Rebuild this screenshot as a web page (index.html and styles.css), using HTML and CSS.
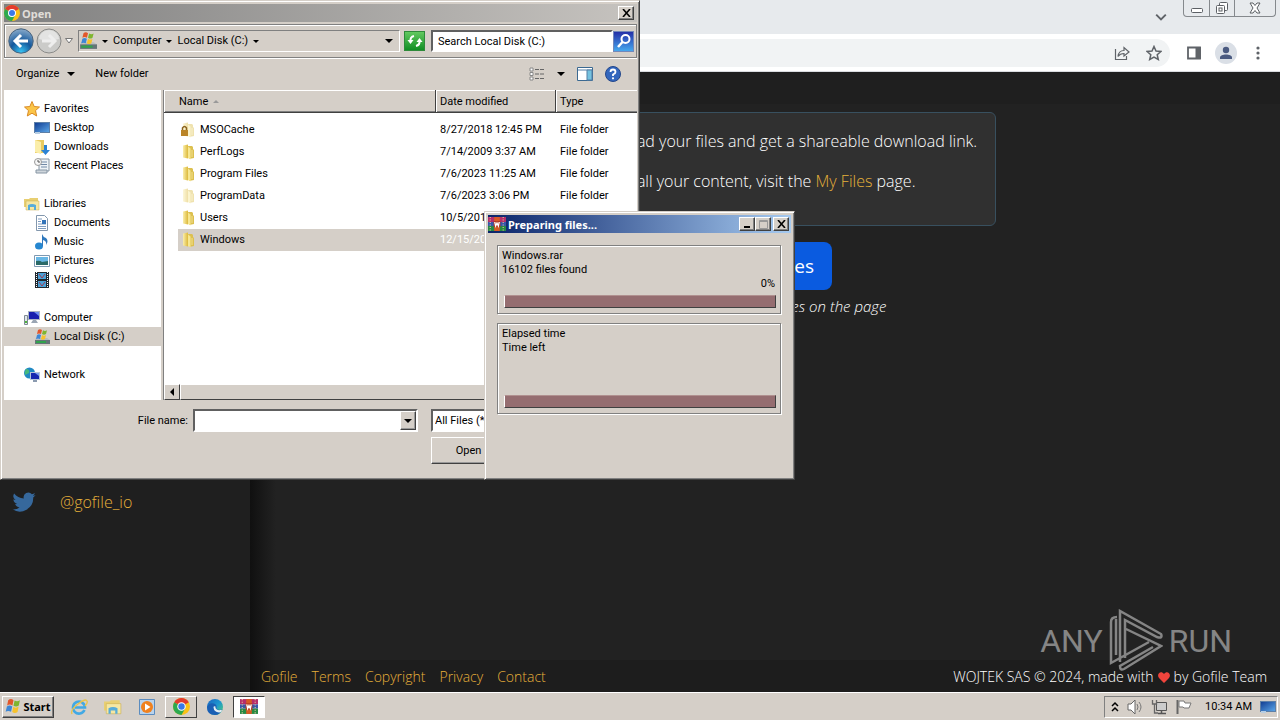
FILE: index.html
```html
<!DOCTYPE html>
<html lang="en">
<head>
<meta charset="utf-8">
<title>Gofile</title>
<link rel="stylesheet" href="styles.css">
</head>
<body>
<svg class="defs" aria-hidden="true">
  <defs>
    <linearGradient id="gold" x1="0" x2="1"><stop offset="0" stop-color="#fbeeaa"/><stop offset="1" stop-color="#dcb93c"/></linearGradient>
    <linearGradient id="screen" x1="0" y1="0" x2="1" y2="1"><stop offset="0" stop-color="#123f94"/><stop offset="1" stop-color="#5aa4e6"/></linearGradient>
    <linearGradient id="edgeg" x1="0" y1="0" x2="1" y2="1"><stop offset="0" stop-color="#1b62c0"/><stop offset=".5" stop-color="#1c96cf"/><stop offset="1" stop-color="#55d46a"/></linearGradient>
    <radialGradient id="orb" cx=".5" cy=".95" r=".9"><stop offset="0" stop-color="#38c4f4"/><stop offset=".5" stop-color="#14589c"/><stop offset="1" stop-color="#7fa3c6"/></radialGradient>
    <symbol id="chrome" viewBox="0 0 16 16">
      <circle cx="8" cy="8" r="8" fill="#fbc116"/>
      <path d="M8 8L1.100 4A8 8 0 0 1 14.900 4z" fill="#e33b2e"/>
      <path d="M1.100 4A8 8 0 0 0 8 16L11.300 10 8 8z" fill="#2da94f"/>
      <circle cx="8" cy="8" r="4" fill="#fff"/><circle cx="8" cy="8" r="3" fill="#3b78e7"/>
    </symbol>
    <symbol id="folder" viewBox="0 0 16 16">
      <path d="M8 2h4l1 1v2l1 1v8l-5 1z" fill="#dcc050"/>
      <path d="M3 1.500L8 .5v14l-5-1z" fill="url(#gold)"/><path d="M8 2.500l2.500 2V15.500L8 14z" fill="#f7e791"/>
      <path d="M12 6v7" stroke="#f3e190"/>
    </symbol>
    <symbol id="flag" viewBox="0 0 16 16">
      <path d="M3 2q2.500-2 5 0L7 7Q4.500 5.300 2 7z" fill="#e2572b"/><path d="M9 2.300q2.500 1.700 5-.3l-1 5q-2.500 1.800-5 .2z" fill="#7fb52f"/>
      <path d="M1.800 8q2.500-1.700 5 0L5.700 13Q3 11.400.6 13z" fill="#3d87d6"/><path d="M7.800 8.300q2.500 1.700 5-.2l-1 5q-2.500 1.800-5 .1z" fill="#f6c22c"/>
    </symbol>
    <symbol id="disk" viewBox="0 0 16 16">
      <path d="M2 9h11l3 2v4H1v-4z" fill="#b9bdbf"/><path d="M1 11h15v4H1z" fill="#657477"/><path d="M2 12h10v2H2z" fill="#31a34d"/>
      <path d="M4 1q2-1.500 4 0L7 5Q5 4 3 5z" fill="#e2572b"/><path d="M9 1.300q2 1.400 4 0L12 5q-2 1.500-4 0z" fill="#7fb52f"/><path d="M3 6q2-1.500 4 0l-1 4q-2-1-4 0z" fill="#3d87d6"/><path d="M8 6q2 1.500 4 0l-1 4q-2 1.500-4 0z" fill="#f6c22c"/>
    </symbol>
    <symbol id="desktop" viewBox="0 0 16 16"><path d="M0 2h16v11H0z" fill="#5d7fa7"/><path d="M1 3h14v9H1z" fill="url(#screen)"/><path d="M1 12h5v2H1z" fill="#b7cde2"/></symbol>
    <symbol id="rar" viewBox="0 0 16 16" preserveAspectRatio="none">
      <path d="M0 1h16v5H0z" fill="#b52e6b"/><path d="M0 6h16v4H0z" fill="#3857a9"/><path d="M0 10h16v5H0z" fill="#278a43"/>
      <path d="M5.500 1h5v14h-5z" fill="#d85a24"/><path d="M2 1v14M13.500 1v14" stroke="#e8c89b" stroke-dasharray="1 1.500"/>
      <path d="M5 5h6v6H5z" fill="#b33a1e"/><path d="M6 6l.8 4L8 7l1.200 3L10 6" fill="none" stroke="#fff" stroke-width="1.200"/>
    </symbol>
    <symbol id="libs" viewBox="0 0 16 16"><path d="M0 3h5l1-1h8v9H0z" fill="#e8cf72"/><path d="M2 5h13v9H2z" fill="#f5e7a3" stroke="#c9ac4d" stroke-width=".5"/><path d="M4 14V9q4-2 8 0v5h-2v-3H6v3z" fill="#57acd9"/></symbol>
  </defs>
</svg>

<div class="desktop">
  <div class="browser">
    <header class="tabstrip">
      <svg class="tab-search" viewBox="0 0 10 10"><path d="M1 3L5 7 9 3" fill="none" stroke="#5f6368" stroke-width="1.600"/></svg>
      <div class="caption-buttons">
        <button aria-label="Minimize"><svg width="14" height="14" viewBox="0 0 14 14"><rect x="1.500" y="7.500" width="11" height="4" rx="1" fill="#fff" stroke="#5c6065"/></svg></button>
        <button aria-label="Restore"><svg width="14" height="14" viewBox="0 0 14 14"><rect x="4.500" y="1.500" width="8" height="8" rx="1" fill="#fff" stroke="#5c6065"/><rect x="1.500" y="4.500" width="8" height="8" rx="1" fill="#fff" stroke="#5c6065"/><rect x="4" y="7" width="3" height="3" fill="none" stroke="#5c6065"/></svg></button>
        <button class="wide" aria-label="Close"><svg width="14" height="14" viewBox="0 0 14 14"><path d="M2 2h3l2 2.500L9 2h3L9 7l3 5H9L7 9.500 5 12H2l3-5z" fill="#fff" stroke="#5c6065"/></svg></button>
      </div>
    </header>
    <div class="toolbar">
      <div class="omnibox">
        <button aria-label="Share"><svg width="16" height="16" viewBox="0 0 16 16"><path d="M1.500 4v10.500h11V11M4 11.500C4.500 7 7 5.500 10 5.500V2.500L15 7l-5 4V8.500c-3 0-4.500.8-6 3z" fill="none" stroke="#5f6368" stroke-width="1.200"/></svg></button>
        <button aria-label="Bookmark"><svg width="16" height="16" viewBox="0 0 16 16"><path d="M8 1.500l2 4.600 4.900.4-3.700 3.200 1.100 4.800L8 12l-4.300 2.500 1.100-4.800L1.100 6.500 6 6.100z" fill="none" stroke="#5f6368" stroke-width="1.500"/></svg></button>
      </div>
      <button aria-label="Side panel"><svg width="16" height="16" viewBox="0 0 16 16"><path d="M2 2.500h12v11H2z" fill="none" stroke="#5f6368" stroke-width="1.800"/><path d="M9.500 2H15v12H9.500z" fill="#5f6368"/></svg></button>
      <button class="avatar" aria-label="Profile"><svg width="22" height="22" viewBox="0 0 22 22"><circle cx="11" cy="11" r="11" fill="#dadfe6"/><circle cx="11" cy="8" r="3.200" fill="#4a5a80"/><path d="M5 17v-1.500c0-4 12-4 12 0V17z" fill="#4a5a80"/></svg></button>
      <button aria-label="Menu"><svg width="16" height="16" viewBox="0 0 16 16" fill="#5f6368"><circle cx="8" cy="3" r="1.600"/><circle cx="8" cy="8" r="1.600"/><circle cx="8" cy="13" r="1.600"/></svg></button>
    </div>
    <div class="site">
      <nav class="side">
        <a class="social" href="#"><svg width="24" height="24" viewBox="0 0 24 24"><path d="M23.600 4.900c-.8.400-1.700.6-2.700.8 1-.6 1.700-1.500 2-2.600-.9.500-1.900.9-3 1.100a4.700 4.700 0 0 0-8.100 4.300C7.900 8.300 4.400 6.400 2.100 3.600a4.700 4.700 0 0 0 1.500 6.300c-.8 0-1.500-.2-2.200-.6 0 2.300 1.600 4.300 3.800 4.700-.7.200-1.400.2-2.100.1.600 1.900 2.300 3.200 4.400 3.300A9.500 9.500 0 0 1 .5 19.300a13.400 13.400 0 0 0 20.700-11.900c.9-.7 1.800-1.500 2.400-2.500z" fill="#36689c"/></svg>@gofile_io</a>
      </nav>
      <div class="page">
        <div class="page-head"></div>
        <main>
          <div class="notice">
            <p>ad your files and get a shareable download link.</p>
            <p>all your content, visit the <a href="#">My Files</a> page.</p>
          </div>
          <button class="upload">es</button>
          <p class="hint">Or drag &amp; drop your files on the page</p>
        </main>
        <div class="brand">ANY<svg width="54" height="64" viewBox="0 0 54 64"><path d="M8 8Q2 8 2 13V54L40 33M7 10V46M11 53V2L52 25Q54 30 48 28L16 11V49M17 20L52 37L15 60Q11 62 11 57L44 38" fill="none" stroke="currentColor" stroke-width="2.500"/></svg>RUN</div>
        <footer>
          <div class="links"><a href="#">Gofile</a><a href="#">Terms</a><a href="#">Copyright</a><a href="#">Privacy</a><a href="#">Contact</a></div>
          <div class="credit">WOJTEK SAS © 2024, made with <svg width="12" height="11" viewBox="0 0 12 11"><path d="M6 11L1 6C-2 2 3-2 6 2c3-4 8 0 5 4z" fill="#f0443c"/></svg> by Gofile Team</div>
        </footer>
      </div>
    </div>
  </div>

  <section class="window open-dialog" aria-label="Open">
    <div class="titlebar inactive"><svg width="16" height="16"><use href="#chrome"/></svg><span>Open</span>
      <button class="cap" aria-label="Close dialog"><svg width="9" height="8" viewBox="0 0 9 8"><path d="M1 0l7 8M8 0L1 8" stroke="#000" stroke-width="1.600"/></svg></button>
    </div>
    <div class="navbar">
      <button class="orb" aria-label="Back"><svg width="26" height="26" viewBox="0 0 26 26"><circle cx="13" cy="13" r="12.200" fill="url(#orb)" stroke="#49637d"/><path d="M13 7l-6 6 6 6M7.500 13H20" fill="none" stroke="#fff" stroke-width="3"/></svg></button>
      <button class="orb" aria-label="Forward"><svg width="26" height="26" viewBox="0 0 26 26"><circle cx="13" cy="13" r="12" fill="#cbcbc9" stroke="#8b8b89"/><path d="M3 11a10 9 0 0 1 20 0q-10 3-20 0z" fill="#e3e3e2"/><path d="M13 7l6 6-6 6M18 13H6" fill="none" stroke="#eee" stroke-width="3"/></svg></button>
      <svg class="recent" width="8" height="6" viewBox="0 0 8 6"><path d="M.5.500h7L4 5z" fill="#fff" stroke="#777"/></svg>
      <div class="address">
        <svg width="18" height="18"><use href="#disk"/></svg>
        <i class="tri"></i><span class="crumb">Computer</span><i class="tri"></i><span class="crumb">Local Disk (C:)</span><i class="tri"></i><i class="tri big end"></i>
      </div>
      <button class="refresh" aria-label="Refresh"><svg width="18" height="18" viewBox="0 0 18 18"><path d="M8 4Q4 5 4.500 9M10 14q4-1 3.500-5" fill="none" stroke="#fff" stroke-width="2"/><path d="M1.500 8h6l-3 4zM10.500 10h6l-3-4z" fill="#fff"/></svg></button>
      <input class="search" aria-label="Search" value="Search Local Disk (C:)">
      <button class="go" aria-label="Search now"><svg width="18" height="18" viewBox="0 0 18 18"><circle cx="10.500" cy="7" r="4" fill="none" stroke="#fff" stroke-width="2"/><path d="M7.500 10L3 15" stroke="#fff" stroke-width="2.500"/></svg></button>
    </div>
    <div class="commands">
      <button>Organize <i class="tri big"></i></button><button>New folder</button>
      <span class="spacer"></span>
      <button aria-label="Views"><svg width="16" height="14" viewBox="0 0 16 14"><path d="M1 1h3v3H1zM1 5.500h3v3H1zM1 10h3v3H1z" fill="#fff" stroke="#888"/><path d="M6 2.500h9M6 7h9M6 11.500h9" stroke="#666" stroke-dasharray="4 1"/></svg></button>
      <button aria-label="More views"><i class="tri big"></i></button>
      <button aria-label="Preview pane"><svg width="16" height="14" viewBox="0 0 16 14"><path d="M.5.500h15v13H.5z" fill="#fff" stroke="#3b6991"/><path d="M1 3h14" stroke="#557fa5"/><path d="M10 3h5v10h-5z" fill="#75c2df" stroke="#557fa5"/></svg></button>
      <button aria-label="Help"><svg width="16" height="16" viewBox="0 0 16 16"><circle cx="8" cy="8" r="7.500" fill="#3266bd" stroke="#23478b"/><path d="M5.500 6Q5.500 3.500 8 3.500T10.500 6Q10.500 7.500 8 8.500V10" fill="none" stroke="#fff" stroke-width="1.800"/><circle cx="8" cy="12.300" r="1.100" fill="#fff"/></svg></button>
    </div>
    <div class="explorer">
      <ul class="tree">
        <li><svg viewBox="0 0 16 16"><path d="M8 .5l2.200 5 5.300.5-4 3.600 1.200 5.400L8 12.200 3.300 15l1.200-5.400-4-3.600 5.300-.5z" fill="#fbc548" stroke="#d98a26"/></svg>Favorites</li>
        <li class="sub"><svg><use href="#desktop"/></svg>Desktop</li>
        <li class="sub"><svg viewBox="0 0 16 16"><path d="M1 1h9v13H1z" fill="#e9cb62"/><path d="M1 1l6 2v12l-6-2z" fill="#fbeeaa"/><path d="M10 6h3v5h3l-4.500 5L7 11h3z" fill="#2b82d4"/></svg>Downloads</li>
        <li class="sub"><svg viewBox="0 0 16 16"><path d="M5 1h10v12H5z" fill="#eef3f7" stroke="#8796a4"/><path d="M2 12h11v3H2z" fill="#cfd6dc" stroke="#8796a4"/><path d="M7 4h6M7 6.500h6M7 9h6" stroke="#7189a6"/><circle cx="4" cy="4" r="3.500" fill="#f7f7f7" stroke="#9a9a9a"/><path d="M4 2v2h2" fill="none" stroke="#555"/></svg>Recent Places</li>
        <li class="group"><svg><use href="#libs"/></svg>Libraries</li>
        <li class="sub"><svg viewBox="0 0 16 16"><path d="M2.500.500h8l3 3v12h-11z" fill="#fff" stroke="#8397ad"/><path d="M4 4h4M4 6.500h3M4 9h8M4 11.500h8M4 13.500h8" stroke="#7e9cc0"/><path d="M8 5h4v4H8z" fill="#3374b9"/></svg>Documents</li>
        <li class="sub"><svg viewBox="0 0 16 16"><ellipse cx="5" cy="12" rx="4" ry="3.500" fill="#2687d0"/><path d="M8 12V0q1 3 4 4 3 3 0 7 1-4-3-5v6z" fill="#2f78bd"/></svg>Music</li>
        <li class="sub"><svg viewBox="0 0 16 16"><path d="M.5 2.500h15v11H.5z" fill="#fff" stroke="#7e99b2"/><path d="M2 4h12v8H2z" fill="#69b7e5"/><path d="M2 8q4-1 6 1l6-1v4H2z" fill="#2a6a68"/></svg>Pictures</li>
        <li class="sub"><svg viewBox="0 0 16 16"><path d="M1 0h14v16H1z" fill="#20272e"/><path d="M4 1h8v6H4zM4 9h8v6H4z" fill="#4ba1d7"/><path d="M5 2l3 4 3-4M5 10l3 4 3-4" stroke="#a03e52" fill="none"/><path d="M2.500 0v16M13.500 0v16" stroke="#fff" stroke-dasharray="1 1"/></svg>Videos</li>
        <li class="group"><svg viewBox="0 0 16 16"><path d="M4 1h12v9H4z" fill="#a9b3c2"/><path d="M5 2h10v7H5z" fill="#171fae"/><path d="M10 2h5v4z" fill="#6c8df0"/><path d="M9 10h3l2 3H7z" fill="#9aa5b3"/><path d="M.5 5.500h3v9h-3z" fill="#e0e6ea" stroke="#7e8b95"/><path d="M1 11h2v2H1z" fill="#50b33c"/></svg>Computer</li>
        <li class="sub picked"><svg><use href="#disk"/></svg>Local Disk (C:)</li>
        <li class="group"><svg viewBox="0 0 16 16"><circle cx="5.500" cy="6" r="5.500" fill="#2089c4"/><path d="M2 2q4 0 3 4l-4 2q-1-3 1-6z" fill="#45b97d"/><path d="M6 5h10v8H6z" fill="#b8c6d9"/><path d="M7 6h8v6H7z" fill="#1727b0"/><path d="M11 6h4v3z" fill="#7c9cf0"/><path d="M9 13h4v2H9z" fill="#8b9bb0"/></svg>Network</li>
      </ul>
      <div class="files">
        <table>
          <colgroup><col class="c-name"><col class="c-date"><col></colgroup>
          <thead><tr><th>Name <i class="sort"></i></th><th>Date modified</th><th>Type</th></tr></thead>
          <tbody>
            <tr><td><span><svg><use href="#folder" opacity=".45"/><path d="M1 8h7v6H1z" fill="#ba8427"/><path d="M2.500 8V6q2-3 4 0v2" fill="none" stroke="#8c641e" stroke-width="1.500"/></svg>MSOCache</span></td><td>8/27/2018 12:45 PM</td><td>File folder</td></tr>
            <tr><td><span><svg><use href="#folder"/></svg>PerfLogs</span></td><td>7/14/2009 3:37 AM</td><td>File folder</td></tr>
            <tr><td><span><svg><use href="#folder"/></svg>Program Files</span></td><td>7/6/2023 11:25 AM</td><td>File folder</td></tr>
            <tr><td><span><svg><use href="#folder" opacity=".45"/></svg>ProgramData</span></td><td>7/6/2023 3:06 PM</td><td>File folder</td></tr>
            <tr><td><span><svg><use href="#folder"/></svg>Users</span></td><td>10/5/2017</td><td></td></tr>
            <tr class="picked"><td><span><svg><use href="#folder"/></svg>Windows</span></td><td>12/15/2022</td><td></td></tr>
          </tbody>
        </table>
        <div class="scroll"><button aria-label="Scroll left"><i></i></button><div class="thumb"></div></div>
      </div>
    </div>
    <div class="bottom">
      <label for="fname">File name:</label>
      <div class="combo"><input id="fname"><button aria-label="Show names"><i class="tri big"></i></button></div>
      <div class="right">
        <select aria-label="File type"><option>All Files (*.*)</option></select>
        <button class="push">Open</button>
      </div>
    </div>
  </section>

  <section class="window progress-dialog" aria-label="Preparing files">
    <div class="titlebar"><svg width="18" height="16"><use href="#rar"/></svg><span>Preparing files...</span>
      <button class="cap" aria-label="Minimize window"><svg width="9" height="8"><path d="M1 6h6v2H1z"/></svg></button>
      <button class="cap" aria-label="Maximize window"><svg width="9" height="9" viewBox="0 0 9 9"><path d="M.5.500h8v8h-8zM0 1.500h9" fill="none" stroke="#999"/></svg></button>
      <button class="cap gap" aria-label="Close window"><svg width="9" height="8" viewBox="0 0 9 8"><path d="M1 0l7 8M8 0L1 8" stroke="#000" stroke-width="1.600"/></svg></button>
    </div>
    <div class="group-box">
      <p>Windows.rar</p><p>16102 files found</p><p class="pct">0%</p>
      <div class="bar"></div>
    </div>
    <div class="group-box times">
      <p>Elapsed time</p><p>Time left</p>
      <div class="bar"></div>
    </div>
  </section>

  <div class="taskbar">
    <button class="start"><svg width="17" height="17"><use href="#flag"/></svg>Start</button>
    <div class="launch">
      <button aria-label="Internet Explorer"><svg width="18" height="18" viewBox="0 0 18 18"><path d="M14.500 12A6 6 0 1 1 15 9.500H5" fill="none" stroke="#42a9e4" stroke-width="2.600"/><path d="M2 16Q0 12 8 6t9-3q1 2-2 5" fill="none" stroke="#e9c44b" stroke-width="1.400"/></svg></button>
      <button aria-label="Explorer"><svg width="18" height="18"><use href="#libs"/></svg></button>
      <button aria-label="Media Player"><svg width="18" height="18" viewBox="0 0 18 18"><path d="M1.500 1.500h15v15h-15z" fill="#b9d3ec" stroke="#5b8cbf"/><circle cx="9" cy="9" r="6" fill="#f0811e"/><path d="M7 5.500v7L12.500 9z" fill="#fff"/></svg></button>
      <button class="task" aria-label="Chrome"><svg width="17" height="17"><use href="#chrome"/></svg></button>
      <button aria-label="Edge"><svg width="18" height="18" viewBox="0 0 18 18"><circle cx="9" cy="9" r="8" fill="url(#edgeg)"/><path d="M1 9Q3 4 8 5.500q3 1 2.500 4-.5 1.500 1 2 3 1 5-.5Q14 17 9 17 1 17 1 9z" fill="#1a5fb4"/><path d="M7.500 9.500Q8 14 13 14.500q2 0 3-1.500l-.5-1.200q-3 1-5-.5Q9 10 9.500 8.500 7.500 7.500 7.500 9.500z" fill="#e2eef3"/></svg></button>
      <button class="task active" aria-label="WinRAR"><svg width="18" height="17"><use href="#rar"/></svg></button>
    </div>
    <div class="tray">
      <svg width="8" height="12" viewBox="0 0 8 12"><path d="M1 5l3-3 3 3M1 10l3-3 3 3" fill="none" stroke="#000" stroke-width="1.500"/></svg>
      <svg width="16" height="16" viewBox="0 0 16 16"><path d="M1 5h3l4-4v14l-4-4H1z" fill="#fff" stroke="#666"/><path d="M10 5q2 3 0 6M12 3q4 5 0 10" fill="none" stroke="#777"/></svg>
      <svg width="17" height="16" viewBox="0 0 17 16"><path d="M5.500 3.500h10v8h-10z" fill="#ccc" stroke="#555"/><path d="M7 14.500h8M10.500 12v2" stroke="#555" stroke-width="1.500"/><path d="M1.500 1v4h4V1M3.500 5v9H7" fill="none" stroke="#666" stroke-width="1.300"/></svg>
      <svg width="16" height="16" viewBox="0 0 16 16"><path d="M1.500 1v14" stroke="#666" stroke-width="2"/><path d="M3 2h5l1 2h6l-2 5H8L7 8H3z" fill="#fff" stroke="#777"/></svg>
      <time>10:34 AM</time>
      <svg width="16" height="16"><use href="#desktop"/></svg>
    </div>
  </div>
</div>
</body>
</html>
```
FILE: styles.css
```css
:root {
  --face: #d5cfc8;
  --dark: #404040;
  --ui: 11px/14px Roboto, Tahoma, sans-serif;
  --ui-bold: 700 11px/13px "Noto Sans", Tahoma, sans-serif;
  --web: "Open Sans", "Noto Sans", sans-serif;
  --gold: #e6b03a;
}
* { box-sizing: border-box; }
body { margin: 0; font: var(--ui); color: #000; }
p, ul { margin: 0; padding: 0; }
button, input, select { font: inherit; color: inherit; border-radius: 0; padding: 0; margin: 0; }
button { background: none; border: 0; display: flex; align-items: center; justify-content: center; }
svg { flex: none; display: block; }
.defs { position: absolute; width: 0; height: 0; }
.desktop { position: relative; height: 100vh; display: flex; flex-direction: column; overflow: hidden; }

/* Browser */
.browser { flex: 1; display: flex; flex-direction: column; min-height: 0; }
.tabstrip { height: 34px; background: #e7eaed; display: flex; justify-content: flex-end; align-items: flex-start; padding-right: 4px; }
.tab-search { width: 12px; height: 12px; margin: 11px 16px 0 0; }
.caption-buttons { display: flex; height: 17px; border: 1px solid #85898d; border-top: 0; border-radius: 0 0 4px 4px; }
.caption-buttons button { width: 25px; }
.caption-buttons button + button { border-left: 1px solid #85898d; }
.caption-buttons .wide { width: 41px; }
.toolbar { height: 38px; background: #fff; border-bottom: 1px solid #dadce0; display: flex; align-items: center; gap: 16px; padding-right: 14px; }
.omnibox { flex: 1; height: 28px; border-radius: 14px; background: #f1f3f4; display: flex; align-items: center; justify-content: flex-end; gap: 16px; padding-right: 8px; }
.toolbar > button { width: 16px; }
.toolbar > .avatar { width: 22px; margin: 0 -3px; }
.site { flex: 1; display: flex; min-height: 0; background: #222; font: 300 16px/24px var(--web); color: #fff; }
.site a { color: var(--gold); text-decoration: none; }
.side { flex: 0 0 250px; background: #1f1f1f; display: flex; flex-direction: column; justify-content: flex-end; padding: 0 12px 178px; }
.social { display: flex; align-items: center; gap: 24px; }
.page { flex: 1; display: flex; flex-direction: column; background: linear-gradient(90deg, #101010, #222 26px); }
.page-head { height: 32px; background: #1f1f1f; }
main { flex: 1; display: flex; flex-direction: column; align-items: center; padding-top: 8px; }
.notice { border: 1px solid #38505f; border-radius: 6px; background: #303030; padding: 16px 18px 16px 102px; }
.notice p { margin-bottom: 16px; white-space: nowrap; }
.upload { width: 134px; height: 48px; margin: 16px 0 4px; padding-right: 18px; justify-content: flex-end; border-radius: 8px; background: #0a5be0; font: 400 19px/24px var(--web); color: #fff; }
.hint { font-size: 15px; font-style: italic; }
.brand { position: relative; z-index: 1; align-self: flex-end; display: flex; align-items: center; gap: 6px; margin: 0 48px -6px 0; height: 50px; color: #858585; font: 400 32px/40px Roboto, sans-serif; }
footer { height: 32px; background: linear-gradient(90deg, #101010, #1d1d1d 26px); display: flex; align-items: center; justify-content: space-between; padding: 2px 13px 0 11px; font-size: 14px; }
.links { display: flex; gap: 14px; }
.credit { display: flex; align-items: center; gap: 4px; }

/* Classic windows */
.window { position: absolute; background: var(--face); border: 1px solid; border-color: #d5cfc8 var(--dark) var(--dark) #d5cfc8; box-shadow: inset 1px 1px #fff, inset -1px -1px #808080; }
.titlebar { display: flex; align-items: center; height: 18px; padding-right: 3px; color: #fff; font: var(--ui-bold); background: linear-gradient(90deg, #0a246a, #a6caf0); }
.titlebar.inactive { color: #e0ddd8; background: linear-gradient(90deg, #808080, #c6c3bf); }
.titlebar span { flex: 1; padding-left: 2px; }
.cap { width: 16px; height: 14px; background: var(--face); border: 1px solid; border-color: #fff var(--dark) var(--dark) #fff; box-shadow: inset -1px -1px #808080; }
.cap.gap { margin-left: 2px; }
.tri { display: inline-block; border: 3px solid transparent; border-top-color: #000; border-bottom: 0; }
.tri.big { border-width: 4px 4px 0; }

.open-dialog { left: 0; top: 0; width: 640px; height: 480px; padding: 3px 2px 2px 3px; display: flex; flex-direction: column; }
.navbar { height: 34px; margin-top: 2px; border: 1px solid #808080; box-shadow: inset 1px 1px #fff, 0 1px #fff; display: flex; align-items: center; padding: 0 2px; }
.orb { width: 28px; }
.recent { margin: 0 5px 0 2px; }
.address { flex: 1; height: 22px; border: 1px solid; border-color: #808080 #fff #fff #808080; display: flex; align-items: center; margin-right: 4px; }
.address .tri { margin: 0 5px; }
.address .tri.end { margin-left: auto; margin-right: 6px; }
.refresh { width: 21px; height: 20px; background: linear-gradient(#62c95f, #118e24); border: 1px solid #2e8a3a; margin-right: 6px; }
.search { width: 182px; height: 22px; border: 2px solid; border-color: #606060 #fff #fff #606060; padding: 0 5px; }
.go { width: 21px; height: 21px; background: linear-gradient(#2430a8, #46a8ee); border: 1px solid #7288ba; }
.commands { height: 32px; display: flex; align-items: center; padding: 0 16px 0 12px; gap: 12px; }
.commands button { gap: 8px; }
.commands button:first-child { margin-right: 8px; }
.spacer { flex: 1; }
.explorer { height: 310px; display: flex; }
.tree { flex: 0 0 157px; background: #fff; list-style: none; padding-top: 9px; margin-right: 2px; }
.tree li { height: 19px; display: flex; align-items: center; gap: 4px; padding-left: 20px; }
.tree .sub { padding-left: 30px; }
.tree .group { margin-top: 19px; }
.tree svg { width: 16px; height: 16px; }
.picked { background: var(--face); }
.files { flex: 1; background: #fff; border-left: 1px solid #808080; display: flex; flex-direction: column; justify-content: space-between; }
table { width: 100%; border-spacing: 0; table-layout: fixed; }
.c-name { width: 272px; }
.c-date { width: 120px; }
th { height: 23px; padding: 1px 0 0 4px; text-align: left; font-weight: 400; background: var(--face); border-bottom: 1px solid var(--dark); border-right: 1px solid var(--dark); box-shadow: inset 1px 1px #fff, inset 0 -1px #808080; }
th:first-child { padding-left: 15px; }
th:last-child { border-right: 0; }
thead::after { content: ""; display: block; height: 6px; }
.sort { display: inline-block; border: 3px solid transparent; border-bottom-color: #999; border-top: 0; vertical-align: middle; margin-left: 2px; }
td { height: 22px; padding: 0 0 0 4px; white-space: nowrap; }
td:first-child { padding-left: 14px; }
td span { display: flex; align-items: center; gap: 4px; padding: 2px 0 2px 2px; height: 22px; }
td svg { width: 16px; height: 16px; }
tr.picked { background: linear-gradient(90deg, #fff 14px, var(--face) 14px); }
tr.picked td + td { color: #fff; }
.scroll { display: flex; height: 16px; background: #e9e6e1; }
.scroll button { width: 16px; background: var(--face); border: 1px solid; border-color: #fff var(--dark) var(--dark) #fff; }
.scroll i { border: 4px solid transparent; border-right-color: #000; border-left: 0; }
.thumb { flex: 1; background: var(--face); border: 1px solid; border-color: #fff var(--dark) var(--dark) #fff; }
.bottom { flex: 1; display: flex; align-items: flex-start; padding-top: 9px; }
.bottom label { width: 184px; text-align: right; line-height: 24px; margin-right: 5px; }
.combo, select { height: 23px; border: 2px solid; border-color: #606060 #fff #fff #606060; background: #fff; }
.combo { display: flex; width: 225px; margin-right: 13px; }
.combo input { flex: 1; min-width: 0; border: 0; }
.combo button, .push { background: var(--face); border: 1px solid; border-color: #fff var(--dark) var(--dark) #fff; box-shadow: inset -1px -1px #999; }
.combo button { width: 16px; }
.right { flex: 1; display: flex; flex-direction: column; gap: 5px; }
select { appearance: none; padding-left: 2px; }
.push { width: 75px; height: 27px; }

.progress-dialog { left: 484px; top: 211px; width: 311px; height: 269px; padding: 3px; }
.group-box { margin: 12px 10px 0 9px; height: 69px; padding: 3px 4px 5px; border: 1px solid #808080; box-shadow: inset 1px 1px #fff, 1px 1px #fff; display: flex; flex-direction: column; }
.group-box + .group-box { margin-top: 9px; }
.group-box.times { height: 91px; }
.pct { text-align: right; padding-right: 1px; }
.progress-dialog .titlebar { padding-right: 2px; }
.bar { height: 13px; margin: auto 0 0 2px; background: #956d70; border: 1px solid; border-color: #b0908f var(--dark) var(--dark) #fff; }

/* Taskbar */
.taskbar { position: relative; height: 28px; background: var(--face); border-top: 1px solid #fff; display: flex; align-items: center; padding: 2px; }
.start { width: 52px; height: 22px; gap: 1px; font: var(--ui-bold); border: 1px solid; border-color: #fff var(--dark) var(--dark) #fff; box-shadow: inset -1px -1px #808080; }
.launch { display: flex; flex: 1; height: 22px; padding-left: 8px; }
.launch button { width: 34px; }
.launch .task { width: 32px; margin: 0 1px; border: 1px solid; border-color: #fff var(--dark) var(--dark) #fff; }
.launch .active { background: #fff; border-color: var(--dark) #fff #fff var(--dark); }
.tray { height: 22px; display: flex; align-items: center; gap: 8px; padding: 0 1px 0 6px; border: 1px solid; border-color: #808080 #fff #fff #808080; }
.tray time { padding-left: 5px; }
```
